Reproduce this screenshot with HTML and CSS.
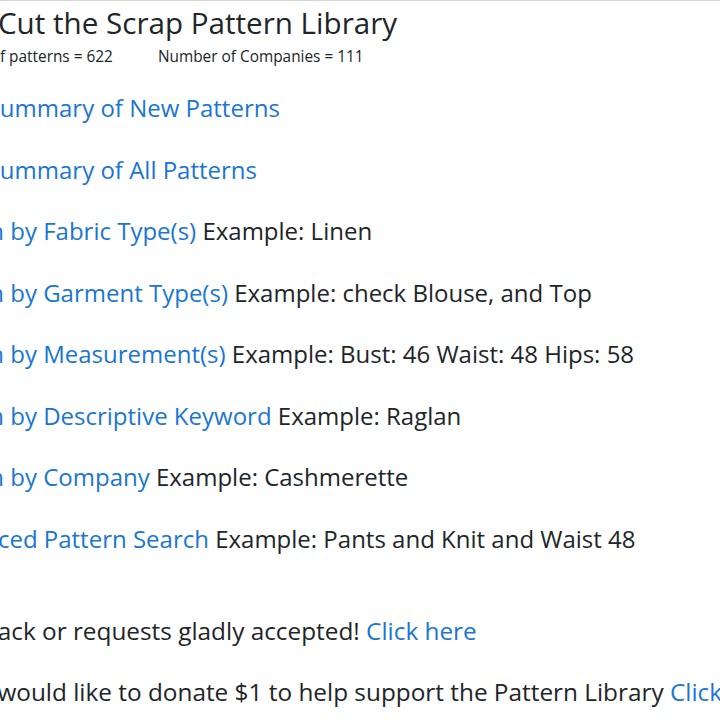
FILE: index.html
```html
<!DOCTYPE html>
<html lang="en">
<head>
<meta charset="utf-8">
<title>Cut the Scrap Pattern Library</title>
<link rel="stylesheet" href="styles.css">
</head>
<body>
<div class="topline"></div>
<main class="page">
  <h2 class="title">Can't Cut the Scrap Pattern Library</h2>
  <p class="stats"><span>Number of patterns = 622</span><span>Number of Companies = 111</span></p>
  <ul class="links">
    <li><a href="#">View Summary of New Patterns</a></li>
    <li><a href="#">View Summary of All Patterns</a></li>
    <li><a href="#">Search by Fabric Type(s)</a> Example: Linen</li>
    <li><a href="#">Search by Garment Type(s)</a> Example: check Blouse, and Top</li>
    <li><a href="#">Search by Measurement(s)</a> Example: Bust: 46 Waist: 48 Hips: 58</li>
    <li><a href="#">Search by Descriptive Keyword</a> Example: Raglan</li>
    <li><a href="#">Search by Company</a> Example: Cashmerette</li>
    <li><a href="#">Advanced Pattern Search</a> Example: Pants and Knit and Waist 48</li>
  </ul>
  <p class="note feedback">Feedback or requests gladly accepted! <a href="#">Click here</a></p>
  <p class="note">If you would like to donate $1 to help support the Pattern Library <a href="#">Click here</a></p>
</main>
</body>
</html>
```

FILE: styles.css
```css
html, body {
  margin: 0;
  padding: 0;
  overflow: hidden;
  background: #fff;
}

body {
  font-family: "Open Sans", "Noto Sans", sans-serif;
  color: #212529;
}

.topline {
  height: 1px;
  background: #d6d6d6;
}

.page {
  margin-left: -72px;
  white-space: nowrap;
}

.title {
  margin: 0 0 0 -8px;
  padding-top: 2px;
  font-size: 29.6px;
  font-weight: 400;
  line-height: 40px;
}

.stats {
  margin: 4px 0 0 -1px;
  font-size: 15.4px;
  line-height: 20px;
  display: flex;
  gap: 45px;
}

.links {
  list-style: none;
  margin: 26px 0 0;
  padding: 0;
}

.links li,
.note {
  font-size: 24px;
  line-height: 30px;
  height: 30px;
  margin: 0 0 31.5px;
}

.note {
  font-size: 24.35px;
}

.feedback {
  margin-top: 62px;
}

a {
  color: #1a76d2;
  text-decoration: none;
}
```
